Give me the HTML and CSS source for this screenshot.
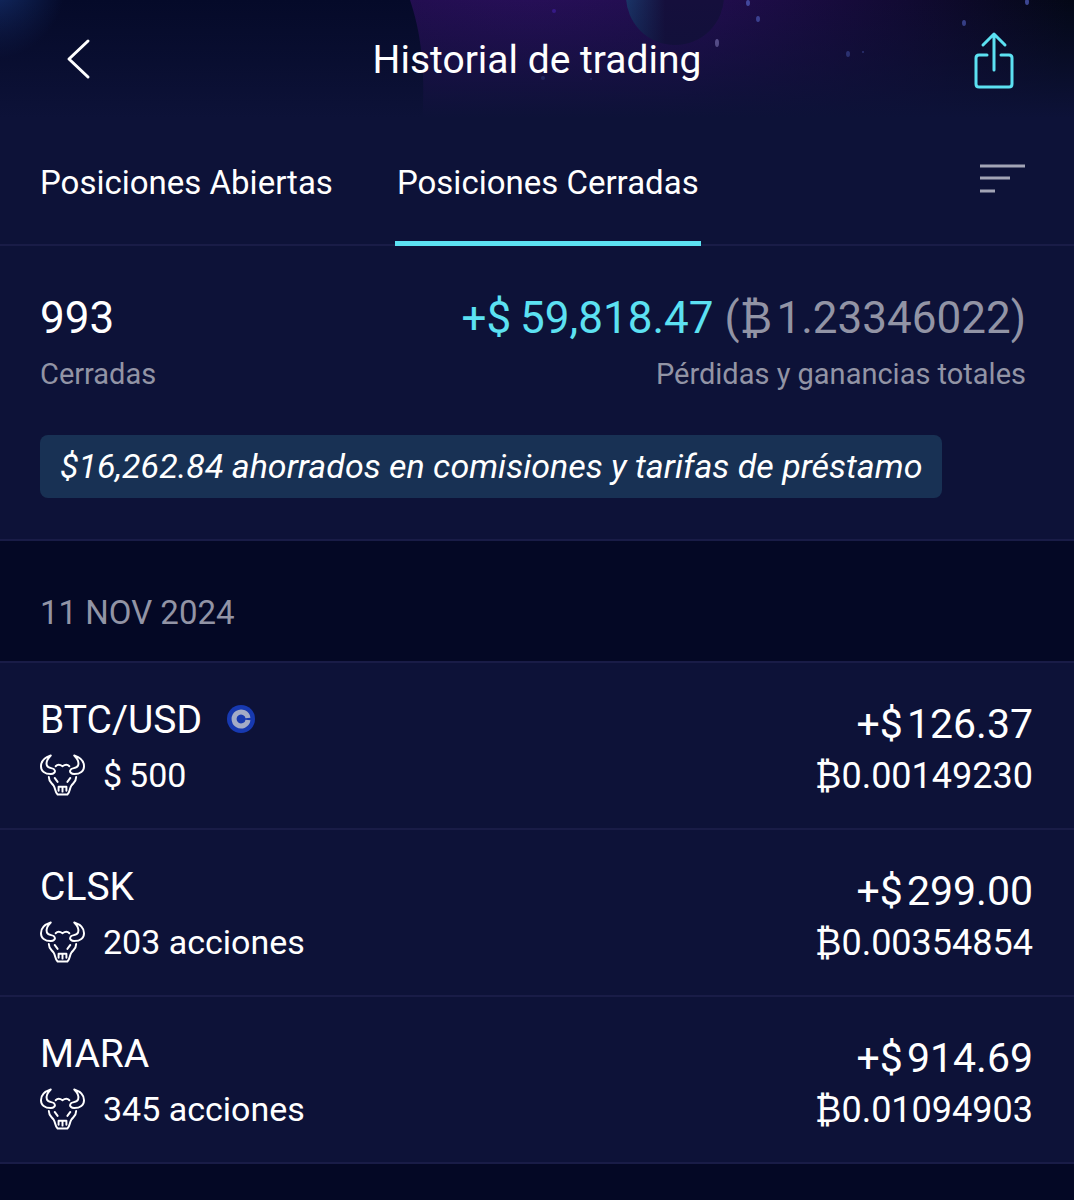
FILE: index.html
```
<!DOCTYPE html>
<html lang="es">
<head>
    <meta charset="UTF-8">
    <meta name="viewport" content="width=device-width, initial-scale=1.0">
    <title>Historial de trading</title>
    <link rel="stylesheet" href="styles.css">
</head>
<body>

<svg class="defs" aria-hidden="true">
    <symbol id="bull" viewBox="0 0 46 44">
        <g fill="none" stroke="currentColor" stroke-width="2" stroke-linecap="round" stroke-linejoin="round">
            <path d="M11 2C5 4 1 8 1 13C1 18 5 21 11 21C14 21 16 19 15 17C14 14 8 16 7 12C6 9 8 5 11 2Z"/>
            <path d="M35 2C41 4 45 8 45 13C45 18 41 21 35 21C32 21 30 19 31 17C32 14 38 16 39 12C40 9 38 5 35 2Z"/>
            <path d="M16 13C18 11 20 11 23 13C26 11 28 11 30 13"/>
            <path d="M9 24C9 29 12 30 14 33C16 36 15 39 18 42H28C31 39 30 36 32 33C34 30 37 29 37 24"/>
            <path d="M15 25L18 29M31 25L28 29"/>
            <path d="M19 38V34H27V38M23 34V39"/>
        </g>
    </symbol>
</svg>

<header class="header">
    <svg class="sky" viewBox="0 0 1074 124" preserveAspectRatio="xMidYMin slice" aria-hidden="true">
        <defs>
            <radialGradient id="nebula" gradientUnits="userSpaceOnUse" cx="530" cy="-30" r="540">
                <stop offset="0" stop-color="#270f58"/>
                <stop offset="0.35" stop-color="#200d4c"/>
                <stop offset="0.7" stop-color="#110a32"/>
                <stop offset="1" stop-color="#040817"/>
            </radialGradient>
            <radialGradient id="corner" gradientUnits="userSpaceOnUse" cx="-10" cy="-15" r="75">
                <stop offset="0" stop-color="#132c66"/>
                <stop offset="1" stop-color="#050a29"/>
            </radialGradient>
            <linearGradient id="planet" x1="0" x2="0.4">
                <stop offset="0" stop-color="#1a3467"/>
                <stop offset="1" stop-color="#150f3c"/>
            </linearGradient>
            <linearGradient id="fade" x1="0" y1="0" x2="0" y2="1">
                <stop offset="0" stop-color="#0d1238" stop-opacity="0"/>
                <stop offset="0.5" stop-color="#0d1238" stop-opacity="0.5"/>
                <stop offset="0.95" stop-color="#0d1238"/>
            </linearGradient>
        </defs>
        <rect width="1074" height="124" fill="url(#nebula)"/>
        <path d="M0 0H410C420 30 426 66 422 124H0Z" fill="url(#corner)"/>
        <circle cx="675" cy="-4" r="49" fill="url(#planet)"/>
        <g fill="#5463c5" fill-opacity="0.7">
            <ellipse cx="717" cy="43" rx="2" ry="4" fill="#a193dc"/>
            <ellipse cx="748" cy="3" rx="2" ry="3"/>
            <ellipse cx="758" cy="19" rx="2" ry="3"/>
            <ellipse cx="848" cy="54" rx="2" ry="3"/>
            <ellipse cx="964" cy="23" rx="2" ry="3"/>
            <ellipse cx="1027" cy="2" rx="2" ry="3"/>
            <circle cx="554" cy="11" r="2" fill="#4320a6"/>
            <circle cx="863" cy="52" r="1"/>
            <circle cx="543" cy="78" r="2"/>
            <circle cx="591" cy="79" r="1"/>
        </g>
        <rect width="1074" height="124" fill="url(#fade)"/>
    </svg>
    <button class="icon-btn" aria-label="Volver">
        <svg width="44" height="44" viewBox="0 0 44 44" fill="none" stroke="#fff" stroke-width="3" stroke-linecap="round" stroke-linejoin="round">
            <path d="M32 3L13 21L32 39"/>
        </svg>
    </button>
    <h1>Historial de trading</h1>
    <button class="icon-btn" aria-label="Compartir">
        <svg width="40" height="58" viewBox="0 0 40 58" fill="none" stroke="#5ce1f2" stroke-width="3" stroke-linecap="round" stroke-linejoin="round">
            <path d="M13 24H5Q2 24 2 27V53Q2 56 5 56H35Q38 56 38 53V27Q38 24 35 24H27"/>
            <path d="M20 39V3M9 14L20 3L31 14"/>
        </svg>
    </button>
</header>

<nav class="tabs">
    <button class="tab">Posiciones Abiertas</button>
    <button class="tab active">Posiciones Cerradas</button>
    <button class="icon-btn filter" aria-label="Filtrar">
        <svg width="46" height="30" viewBox="0 0 46 30" stroke="#a2a4b5" stroke-width="3">
            <path d="M0 2H45M0 14H30M0 27H15"/>
        </svg>
    </button>
</nav>

<main>
    <section class="summary">
        <div class="totals">
            <div>
                <p class="total">993</p>
                <p class="label">Cerradas</p>
            </div>
            <div class="right">
                <p class="total"><span class="gain">+$&#8201;59,818.47</span> <span class="muted">(₿&#8202;1.23346022)</span></p>
                <p class="label">Pérdidas y ganancias totales</p>
            </div>
        </div>
        <p class="savings">$16,262.84 ahorrados en comisiones y tarifas de préstamo</p>
    </section>

    <h2 class="date">11 NOV 2024</h2>

    <ul class="trades">
        <li class="trade">
            <div>
                <p class="symbol">BTC/USD
                    <svg class="coin" width="30" height="30" viewBox="0 0 30 30" aria-hidden="true">
                        <circle cx="15" cy="14" r="14" fill="#1739b0"/>
                        <path d="M22 13A7 7 0 1 0 22 15" fill="none" stroke="#a3abc6" stroke-width="5"/>
                    </svg>
                </p>
                <p class="size"><svg class="bull"><use href="#bull"/></svg>$&#8201;500</p>
            </div>
            <div class="right">
                <p class="profit">+$&#8202;126.37</p>
                <p class="btc">₿0.00149230</p>
            </div>
        </li>
        <li class="trade">
            <div>
                <p class="symbol">CLSK</p>
                <p class="size"><svg class="bull"><use href="#bull"/></svg>203 acciones</p>
            </div>
            <div class="right">
                <p class="profit">+$&#8202;299.00</p>
                <p class="btc">₿0.00354854</p>
            </div>
        </li>
        <li class="trade">
            <div>
                <p class="symbol">MARA</p>
                <p class="size"><svg class="bull"><use href="#bull"/></svg>345 acciones</p>
            </div>
            <div class="right">
                <p class="profit">+$&#8202;914.69</p>
                <p class="btc">₿0.01094903</p>
            </div>
        </li>
    </ul>
</main>

</body>
</html>
```
FILE: styles.css
```
:root {
    --bg: #040825;
    --panel: #0d1238;
    --line: #191c47;
    --accent: #5ce1f2;
    --muted: #9294a5;
}

* { margin: 0; padding: 0; box-sizing: border-box; }
body {
    font-family: Roboto, 'Liberation Sans', sans-serif;
    font-size: 34px;
    font-weight: 400;
    background: var(--bg);
    color: #fff;
}

button { background: none; border: none; color: inherit; font: inherit; cursor: pointer; }
svg { display: block; }
.defs { position: absolute; width: 0; height: 0; }
.icon-btn { display: flex; }
.right { text-align: right; }
.muted { color: var(--muted); }

/* --- Header --- */
.header {
    position: relative;
    display: flex;
    justify-content: space-between;
    align-items: center;
    height: 120px;
    padding: 0 60px 0 56px;
    background: var(--panel);
}
.header > :not(.sky) { position: relative; }
.header h1 { font-size: 39px; font-weight: 400; line-height: 48px; }
.sky { position: absolute; top: 0; left: 0; width: 100%; height: 100%; }

/* --- Tabs --- */
.tabs {
    display: flex;
    gap: 60px;
    height: 126px;
    padding: 0 48px 0 38px;
    background: var(--panel);
    box-shadow: inset 0 -2px var(--line);
}
.tab { padding: 3px 2px 0; border-bottom: 5px solid transparent; font-size: 33px; white-space: nowrap; }
.tab.active { border-color: var(--accent); }
.filter { margin-left: auto; padding-bottom: 8px; align-items: center; }

/* --- Summary --- */
.summary {
    padding: 44px 48px 41px 40px;
    background: var(--panel);
    border-bottom: 2px solid var(--line);
}
.totals { display: flex; justify-content: space-between; }
.total { font-size: 44px; line-height: 56px; }
.gain { color: var(--accent); }
.label { font-size: 29px; line-height: 56px; color: var(--muted); }
.savings {
    display: inline-block;
    margin-top: 33px;
    padding: 0 20px;
    border-radius: 8px;
    background: #183154;
    font-style: italic;
    line-height: 63px;
}

.date {
    padding: 24px 40px 0;
    border-bottom: 2px solid var(--line);
    color: var(--muted);
    font-size: 33px;
    font-weight: 400;
    line-height: 96px;
}

/* --- Trades --- */
.trades { list-style: none; }
.trade {
    display: flex;
    justify-content: space-between;
    padding: 29px 41px 26px 40px;
    background: var(--panel);
    border-bottom: 2px solid var(--line);
}
.symbol { display: flex; align-items: center; gap: 24px; font-size: 39px; line-height: 56px; }
.size { display: flex; align-items: center; gap: 18px; font-size: 34px; line-height: 54px; }
.bull { width: 45px; height: 44px; }
.profit { font-size: 41px; line-height: 64px; }
.btc { font-size: 36px; line-height: 40px; }
```
